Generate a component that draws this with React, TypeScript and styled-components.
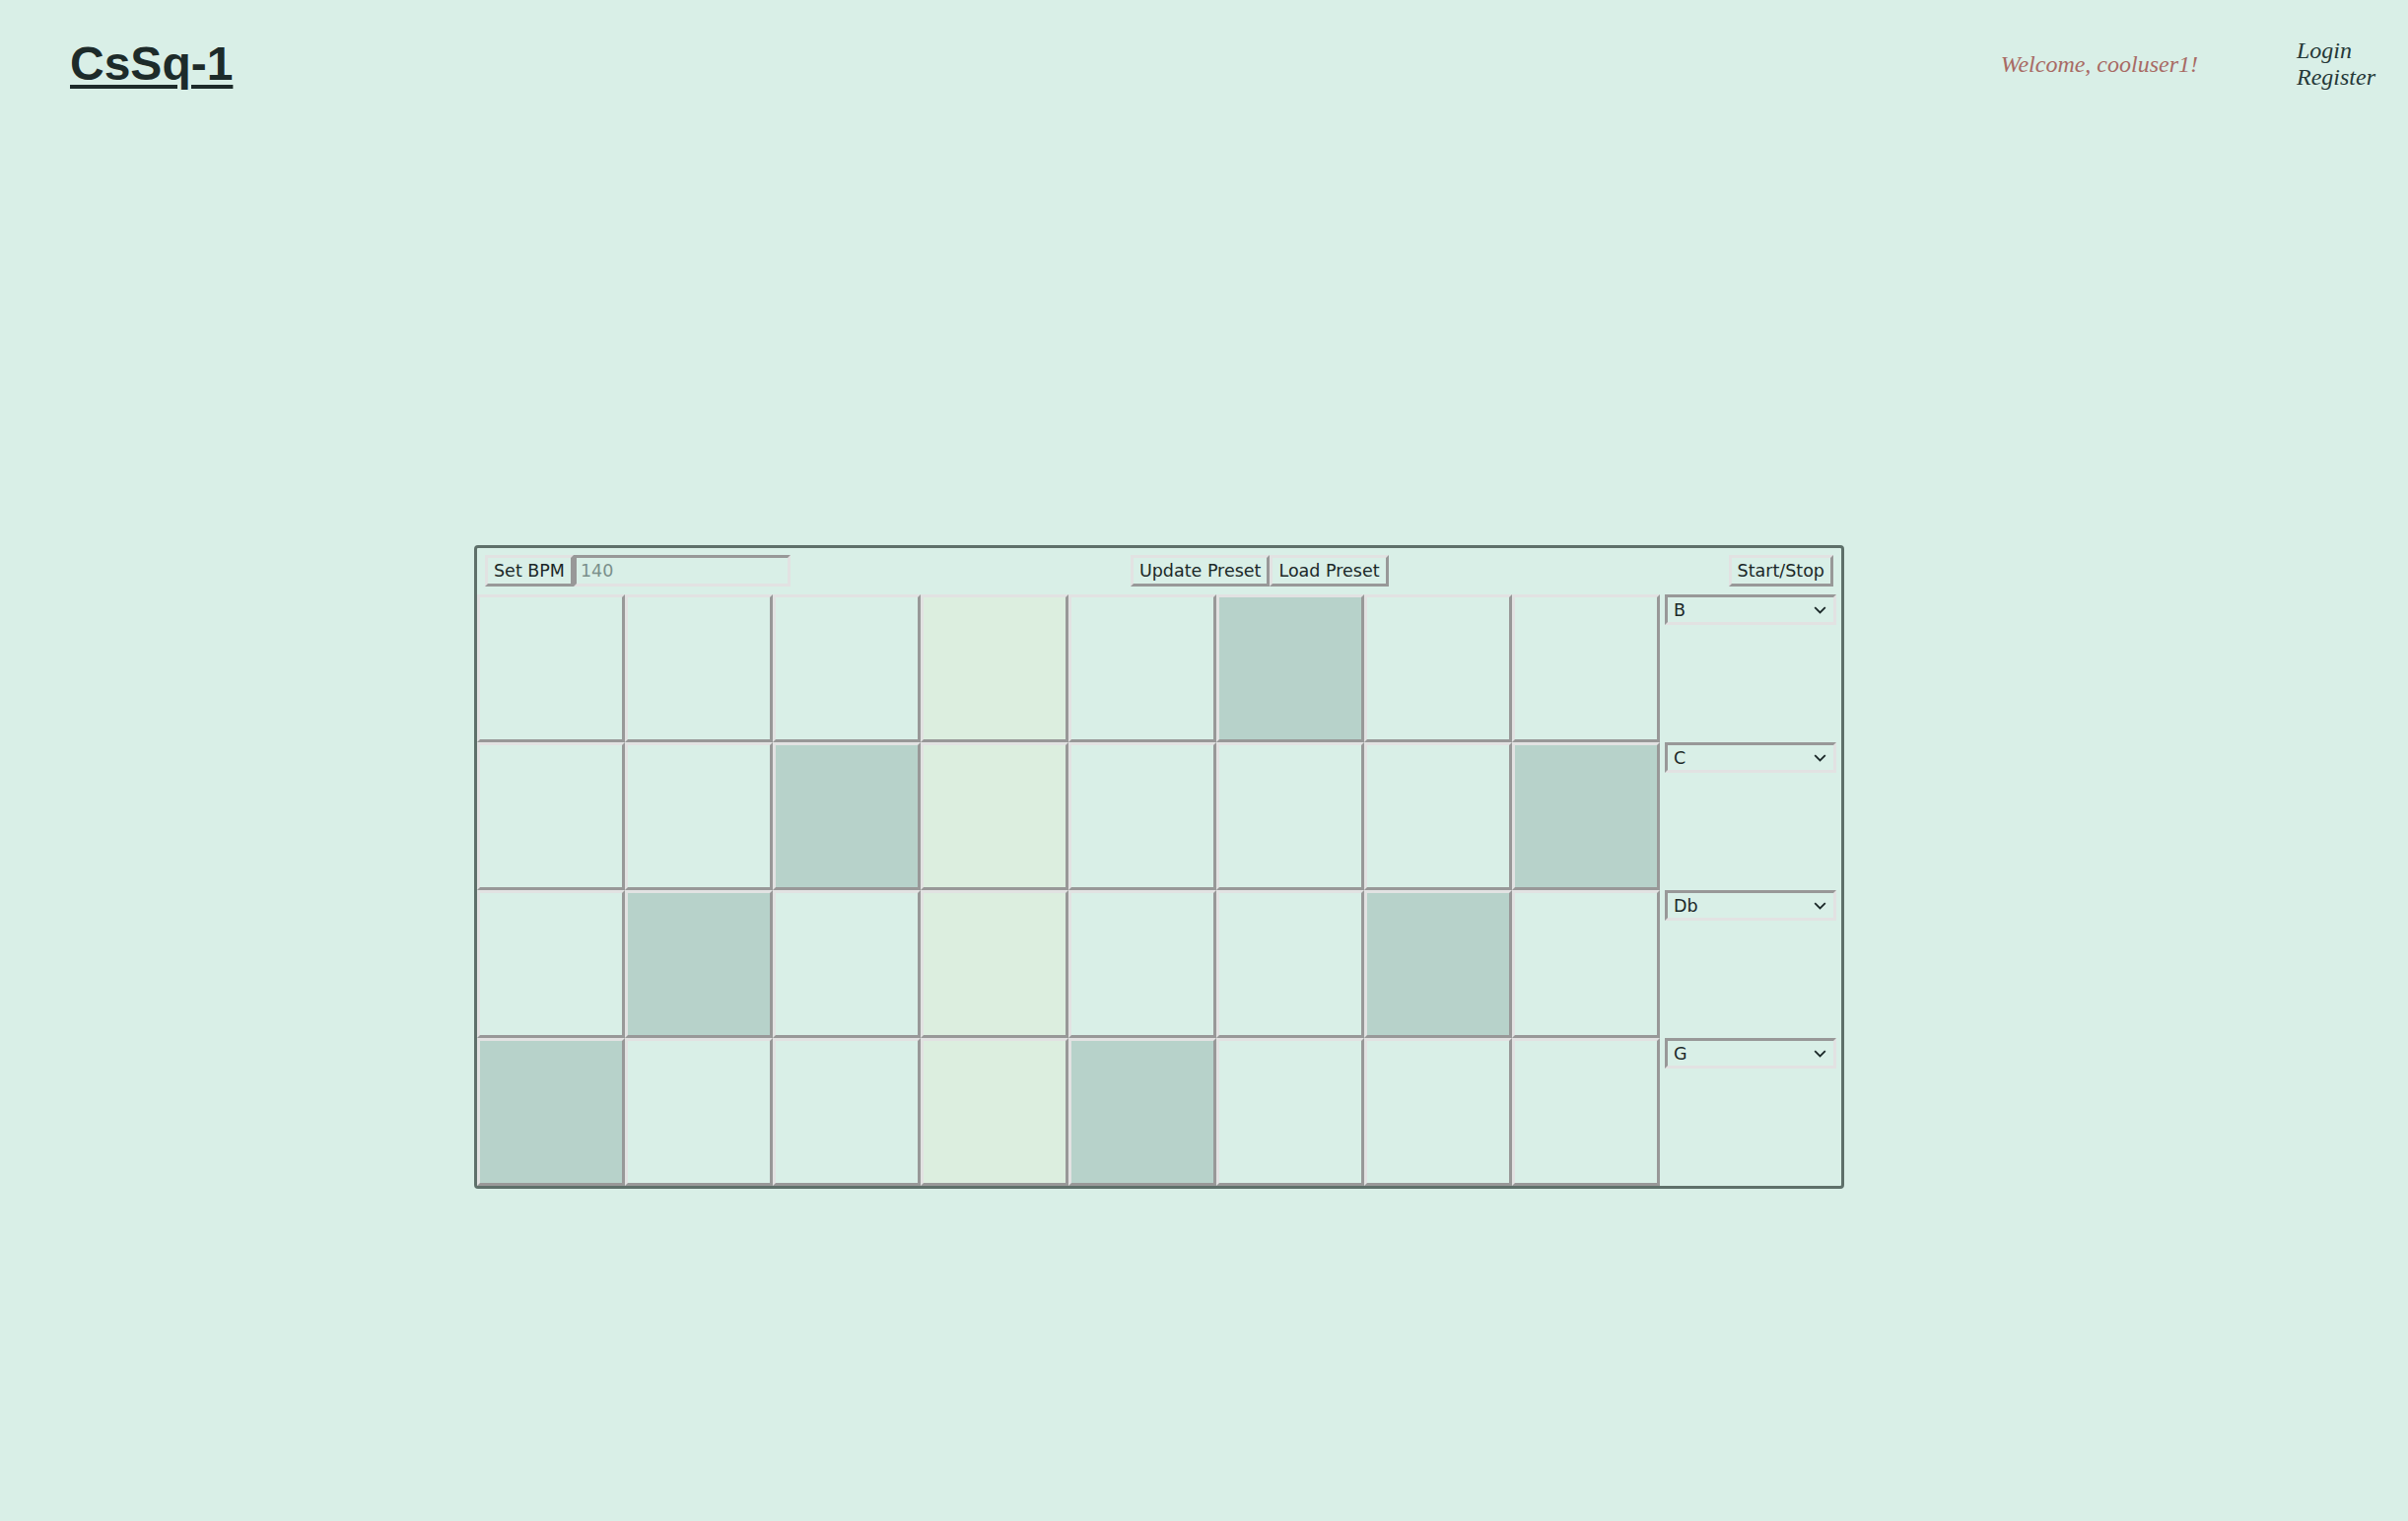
import React from "react";
import styled, { createGlobalStyle } from "styled-components";

const GlobalStyle = createGlobalStyle`
  html, body { margin: 0; padding: 0; }
  body {
    background: #d9efe7;
    font-family: "DejaVu Sans", Verdana, sans-serif;
  }
`;

const Page = styled.div`
  display: flex;
  flex-direction: column;
`;

const Header = styled.header`
  display: flex;
  align-items: center;
  justify-content: space-between;
  height: 130px;
  padding: 0 33px 0 71px;
  box-sizing: border-box;
`;

const Title = styled.h1`
  margin: 0;
  font-family: "Liberation Sans", Arial, sans-serif;
  font-weight: bold;
  font-size: 48px;
  line-height: 1;
  a {
    color: #1d2b2a;
    text-decoration: underline;
    text-decoration-thickness: 4px;
    text-underline-offset: 5px;
  }
`;

const UserArea = styled.div`
  display: flex;
  align-items: center;
  gap: 100px;
  font-family: "Liberation Serif", "Times New Roman", serif;
  font-style: italic;
  font-size: 24px;
  line-height: 27px;
`;

const Welcome = styled.span`
  color: #a86a64;
`;

const AuthLinks = styled.nav`
  display: flex;
  flex-direction: column;
  a {
    color: #253838;
    text-decoration: none;
  }
`;

const Main = styled.main`
  display: flex;
  padding: 423px 0 0 481px;
`;

const Sequencer = styled.section`
  display: flex;
  flex-direction: column;
  border: 3px solid #5e706a;
  border-radius: 4px;
  width: 1384px;
`;

const Toolbar = styled.div`
  display: flex;
  justify-content: space-between;
  align-items: center;
  padding: 7px 8px 8px 8px;
`;

const Group = styled.div`
  display: flex;
`;

const Button = styled.button`
  height: 32px;
  box-sizing: border-box;
  padding: 0 6px;
  margin: 0;
  background: #d9efe7;
  color: #1b2828;
  font-family: "DejaVu Sans", Verdana, sans-serif;
  font-size: 17.5px;
  border-style: solid;
  border-width: 3px;
  border-color: #e2e2e2 #989898 #989898 #e2e2e2;
  cursor: pointer;
`;

const BpmInput = styled.input`
  height: 32px;
  width: 220px;
  box-sizing: border-box;
  padding: 0 4px;
  margin: 0;
  background: #d9efe7;
  color: #1b2828;
  font-family: "DejaVu Sans", Verdana, sans-serif;
  font-size: 17.5px;
  border-style: solid;
  border-width: 3px;
  border-color: #989898 #e2e2e2 #e2e2e2 #989898;
  outline: none;
  &::placeholder {
    color: #7b8f8b;
  }
`;

const Grid = styled.div`
  display: flex;
  flex-direction: column;
`;

const Row = styled.div`
  display: flex;
`;

const Cell = styled.div<{ $on: boolean; $playhead: boolean }>`
  width: 150px;
  height: 150px;
  box-sizing: border-box;
  border-style: solid;
  border-width: 3px;
  border-color: #e2e2e2 #989898 #989898 #e2e2e2;
  background: ${(p) => (p.$on ? "#b7d2ca" : p.$playhead ? "#dceedf" : "#d9efe7")};
`;

const NoteCol = styled.div`
  width: 184px;
  box-sizing: border-box;
  padding: 0 5px;
`;

const SelectWrap = styled.div`
  position: relative;
  width: 174px;
  height: 31px;
`;

const NoteSelect = styled.select`
  appearance: none;
  width: 100%;
  height: 100%;
  box-sizing: border-box;
  margin: 0;
  padding: 0 30px 0 6px;
  background: #d9efe7;
  color: #1b2828;
  font-family: "DejaVu Sans", Verdana, sans-serif;
  font-size: 17.5px;
  border-style: solid;
  border-width: 3px;
  border-color: #989898 #e2e2e2 #e2e2e2 #989898;
  border-radius: 0;
  outline: none;
`;

const Chevron = styled.svg`
  position: absolute;
  right: 10px;
  top: 12px;
  width: 13px;
  height: 8px;
  pointer-events: none;
`;

const NOTES = ["C", "Db", "D", "Eb", "E", "F", "Gb", "G", "Ab", "A", "Bb", "B"];

const rows: { note: string; steps: number[] }[] = [
  { note: "B", steps: [5] },
  { note: "C", steps: [2, 7] },
  { note: "Db", steps: [1, 6] },
  { note: "G", steps: [0, 4] },
];

const PLAYHEAD = 3;

export default function App() {
  return (
    <Page>
      <GlobalStyle />
      <Header>
        <Title>
          <a href="#">CsSq-1</a>
        </Title>
        <UserArea>
          <Welcome>Welcome, cooluser1!</Welcome>
          <AuthLinks>
            <a href="#">Login</a>
            <a href="#">Register</a>
          </AuthLinks>
        </UserArea>
      </Header>
      <Main>
        <Sequencer>
          <Toolbar>
            <Group>
              <Button>Set BPM</Button>
              <BpmInput placeholder="140" />
            </Group>
            <Group>
              <Button>Update Preset</Button>
              <Button>Load Preset</Button>
            </Group>
            <Group>
              <Button>Start/Stop</Button>
            </Group>
          </Toolbar>
          <Grid>
            {rows.map((r, ri) => (
              <Row key={ri}>
                {Array.from({ length: 8 }, (_, ci) => (
                  <Cell key={ci} $on={r.steps.includes(ci)} $playhead={ci === PLAYHEAD} />
                ))}
                <NoteCol>
                  <SelectWrap>
                    <NoteSelect defaultValue={r.note}>
                      {NOTES.map((n) => (
                        <option key={n} value={n}>
                          {n}
                        </option>
                      ))}
                    </NoteSelect>
                    <Chevron viewBox="0 0 13 8">
                      <path d="M1.2 1.2 L6.5 6.5 L11.8 1.2" fill="none" stroke="#1b2828" strokeWidth="1.8" />
                    </Chevron>
                  </SelectWrap>
                </NoteCol>
              </Row>
            ))}
          </Grid>
        </Sequencer>
      </Main>
    </Page>
  );
}
